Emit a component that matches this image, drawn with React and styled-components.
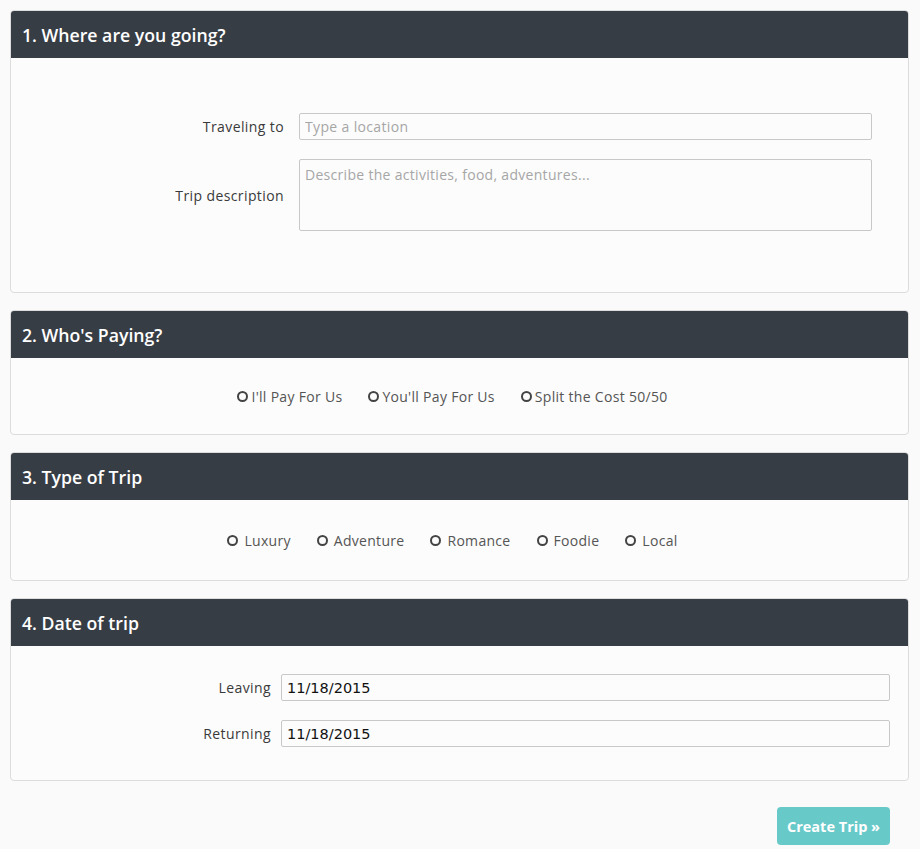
import React from 'react';
import styled, { createGlobalStyle } from 'styled-components';

const GlobalStyle = createGlobalStyle`
  body {
    margin: 0;
    background: #fafafa;
    font-family: 'Open Sans', 'Liberation Sans', sans-serif;
    color: #555;
  }
`;

const Page = styled.div`
  padding: 10px 11px 4px 10px;
  display: flex;
  flex-direction: column;
  gap: 17px;
`;

const Panel = styled.section`
  border: 1px solid #dcdcdc;
  border-radius: 4px;
  background: #fcfcfc;
  overflow: hidden;
`;

const PanelHeader = styled.h2`
  margin: 0;
  height: 47px;
  display: flex;
  align-items: center;
  padding: 0 11px;
  background: #373d44;
  color: #fff;
  font-size: 17.7px;
  font-weight: 600;
`;

const FormBody = styled.div`
  padding: ${(p) => p.$pad};
  display: flex;
  flex-direction: column;
  gap: ${(p) => p.$gap}px;
`;

const Row = styled.div`
  display: grid;
  grid-template-columns: ${(p) => p.$label}px 1fr;
  column-gap: ${(p) => p.$colGap}px;
  align-items: center;
  padding-right: ${(p) => p.$right}px;
`;

const Label = styled.label`
  text-align: right;
  font-size: 14px;
  letter-spacing: 0.4px;
  color: #3a3a3a;
`;

const TextInput = styled.input`
  box-sizing: border-box;
  height: 27px;
  border: 1px solid #c8c8c8;
  border-radius: 2px;
  background: #fcfcfc;
  padding: 0 5px;
  font-family: 'DejaVu Sans', 'Liberation Sans', sans-serif;
  font-size: 14.5px;
  color: #111;
  &::placeholder {
    font-family: 'Open Sans', 'Liberation Sans', sans-serif;
    font-size: 14px;
    letter-spacing: 0.35px;
    color: #a6a6a6;
  }
`;

const TextArea = styled.textarea`
  box-sizing: border-box;
  height: 72px;
  border: 1px solid #c8c8c8;
  border-radius: 2px;
  background: #fcfcfc;
  padding: 5px;
  resize: none;
  font-family: 'Open Sans', 'Liberation Sans', sans-serif;
  font-size: 14px;
  letter-spacing: 0.3px;
  &::placeholder {
    color: #a6a6a6;
  }
`;

const RadioRow = styled.div`
  height: ${(p) => p.$h}px;
  display: flex;
  justify-content: center;
  align-items: center;
  gap: 26px;
  padding-right: 14px;
`;

const RadioOption = styled.label`
  display: flex;
  align-items: center;
  gap: ${(p) => p.$gap}px;
  font-size: 14px;
  letter-spacing: ${(p) => p.$ls}px;
  color: #555;
`;

const Dot = styled.span`
  box-sizing: border-box;
  width: 11px;
  height: 11px;
  border: 2px solid #444;
  border-radius: 50%;
`;

const Footer = styled.div`
  display: flex;
  justify-content: flex-end;
  padding-right: 19px;
  padding-top: 9px;
`;

const CreateButton = styled.button`
  height: 38px;
  padding: 0 10px;
  border: none;
  border-radius: 4px;
  background: #68c9c9;
  color: #fff;
  font-family: 'Open Sans', 'Liberation Sans', sans-serif;
  font-size: 14.5px;
  font-weight: 700;
  cursor: pointer;
`;

const payOptions = ["I'll Pay For Us", "You'll Pay For Us", 'Split the Cost 50/50'];
const tripTypes = ['Luxury', 'Adventure', 'Romance', 'Foodie', 'Local'];

export default function App() {
  return (
    <>
      <GlobalStyle />
      <Page>
        <Panel>
          <PanelHeader>1. Where are you going?</PanelHeader>
          <FormBody $pad="55px 0 61px" $gap={19}>
            <Row $label={273} $colGap={15} $right={36}>
              <Label>Traveling to</Label>
              <TextInput placeholder="Type a location" />
            </Row>
            <Row $label={273} $colGap={15} $right={36}>
              <Label>Trip description</Label>
              <TextArea placeholder="Describe the activities, food, adventures..." />
            </Row>
          </FormBody>
        </Panel>

        <Panel>
          <PanelHeader>2. Who's Paying?</PanelHeader>
          <RadioRow $h={76}>
            {payOptions.map((o) => (
              <RadioOption key={o} $gap={3} $ls={0.3}>
                <Dot />
                {o}
              </RadioOption>
            ))}
          </RadioRow>
        </Panel>

        <Panel>
          <PanelHeader>3. Type of Trip</PanelHeader>
          <RadioRow $h={80}>
            {tripTypes.map((o) => (
              <RadioOption key={o} $gap={6} $ls={0.3}>
                <Dot />
                {o}
              </RadioOption>
            ))}
          </RadioRow>
        </Panel>

        <Panel>
          <PanelHeader>4. Date of trip</PanelHeader>
          <FormBody $pad="28px 0 33px" $gap={19}>
            <Row $label={260} $colGap={10} $right={18}>
              <Label>Leaving</Label>
              <TextInput defaultValue="11/18/2015" />
            </Row>
            <Row $label={260} $colGap={10} $right={18}>
              <Label>Returning</Label>
              <TextInput defaultValue="11/18/2015" />
            </Row>
          </FormBody>
        </Panel>

        <Footer>
          <CreateButton>Create Trip »</CreateButton>
        </Footer>
      </Page>
    </>
  );
}
